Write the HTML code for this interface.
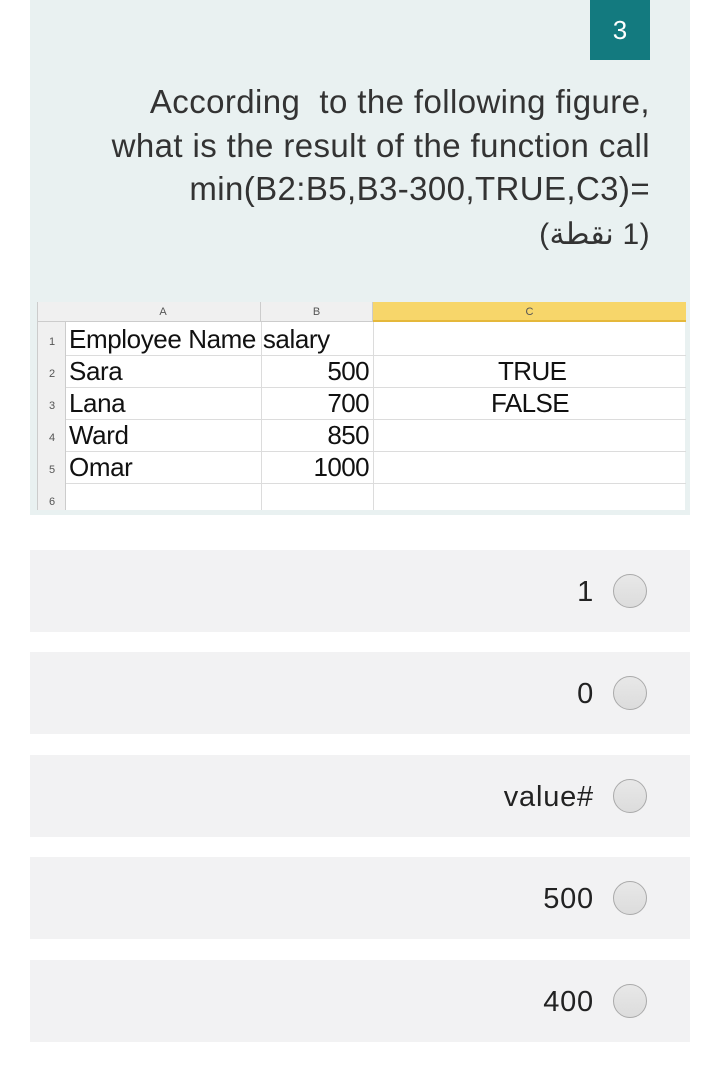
<!DOCTYPE html>
<html><head><meta charset="utf-8"><style>
*{margin:0;padding:0;box-sizing:border-box}
body{width:720px;height:1066px;background:#fff;position:relative;font-family:"Liberation Sans","Noto Sans CJK SC",sans-serif;overflow:hidden}
.panel{position:absolute;left:30px;top:0;width:660px;height:515px;background:#e9f1f1}
.badge{position:absolute;left:590px;top:0;width:60px;height:60px;background:#137a7f;color:#fff;font-size:26px;text-align:center;line-height:60px}
.q{position:absolute;right:70px;top:80px;text-align:right;font-size:33px;letter-spacing:0.4px;line-height:43.5px;color:#333}
.ar{font-size:30px}
.sheet{position:absolute;left:37px;top:302px;width:648px;height:208px;background:#fff;border-left:1px solid #ccc}
.sheet div{position:absolute}
.hdr{top:0;height:20px;background:#f0f0f0;border-bottom:1px solid #ccc;font-size:11px;color:#555;text-align:center;line-height:20px}
.rh{left:0;width:28px;background:#f0f0f0;font-size:11px;color:#555;text-align:center;border-right:1px solid #ccc}
.cell{font-size:26px;color:#111;letter-spacing:-0.4px}
.num{letter-spacing:-0.6px}
.hl{left:28px;width:620px;height:1px;background:#dcdcdc}
.vl{top:20px;width:1px;height:188px;background:#dcdcdc}
.opt{position:absolute;left:30px;width:660px;height:82px;background:#f2f2f3}
.opt span{position:absolute;right:96px;top:0;line-height:84px;font-size:29px;letter-spacing:0.8px;color:#222}
.opt i{position:absolute;left:583px;top:24px;width:34px;height:34px;border-radius:50%;border:1.5px solid #aaa;background:linear-gradient(#e8e8e8,#dcdcdc)}
</style></head><body>
<div class="panel"></div>
<div class="badge">3</div>
<div class="q">According&nbsp; to the following figure,<br>what is the result of the function call<br>min(B2:B5,B3-300,TRUE,C3)=<br><span class="ar" dir="rtl">(1 نقطة)</span></div>
<div class="sheet">
<div class="hdr" style="left:0;width:28px"></div>
<div class="hdr" style="left:28px;width:195px;border-right:1px solid #ccc">A</div>
<div class="hdr" style="left:223px;width:112px;border-right:1px solid #ccc">B</div>
<div class="hdr" style="left:335px;width:313px;background:#f7d66a;border-bottom:2px solid #e5b83a">C</div>
<div class="rh" style="top:20px;height:188px"></div>
<div class="vl" style="left:223px"></div><div class="vl" style="left:335px"></div>
<div class="hl" style="top:53px"></div><div class="hl" style="top:85px"></div><div class="hl" style="top:117px"></div><div class="hl" style="top:149px"></div><div class="hl" style="top:181px"></div>
<div class="rh" style="top:34px;background:none;border:0">1</div>
<div class="rh" style="top:66px;background:none;border:0">2</div>
<div class="rh" style="top:98px;background:none;border:0">3</div>
<div class="rh" style="top:130px;background:none;border:0">4</div>
<div class="rh" style="top:162px;background:none;border:0">5</div>
<div class="rh" style="top:194px;background:none;border:0">6</div>
<div class="cell" style="left:31px;top:22px">Employee Name salary</div>
<div class="cell" style="left:31px;top:54px">Sara</div>
<div class="cell" style="left:31px;top:86px">Lana</div>
<div class="cell" style="left:31px;top:118px">Ward</div>
<div class="cell" style="left:31px;top:150px">Omar</div>
<div class="cell num" style="right:316px;top:54px">500</div>
<div class="cell num" style="right:316px;top:86px">700</div>
<div class="cell num" style="right:316px;top:118px">850</div>
<div class="cell num" style="right:316px;top:150px">1000</div>
<div class="cell num" style="left:460px;top:54px">TRUE</div>
<div class="cell num" style="left:453px;top:86px">FALSE</div>
</div>
<div class="opt" style="top:550px"><span>1</span><i></i></div>
<div class="opt" style="top:652px"><span>0</span><i></i></div>
<div class="opt" style="top:755px"><span>value#</span><i></i></div>
<div class="opt" style="top:857px"><span>500</span><i></i></div>
<div class="opt" style="top:960px"><span>400</span><i></i></div>
</body></html>
